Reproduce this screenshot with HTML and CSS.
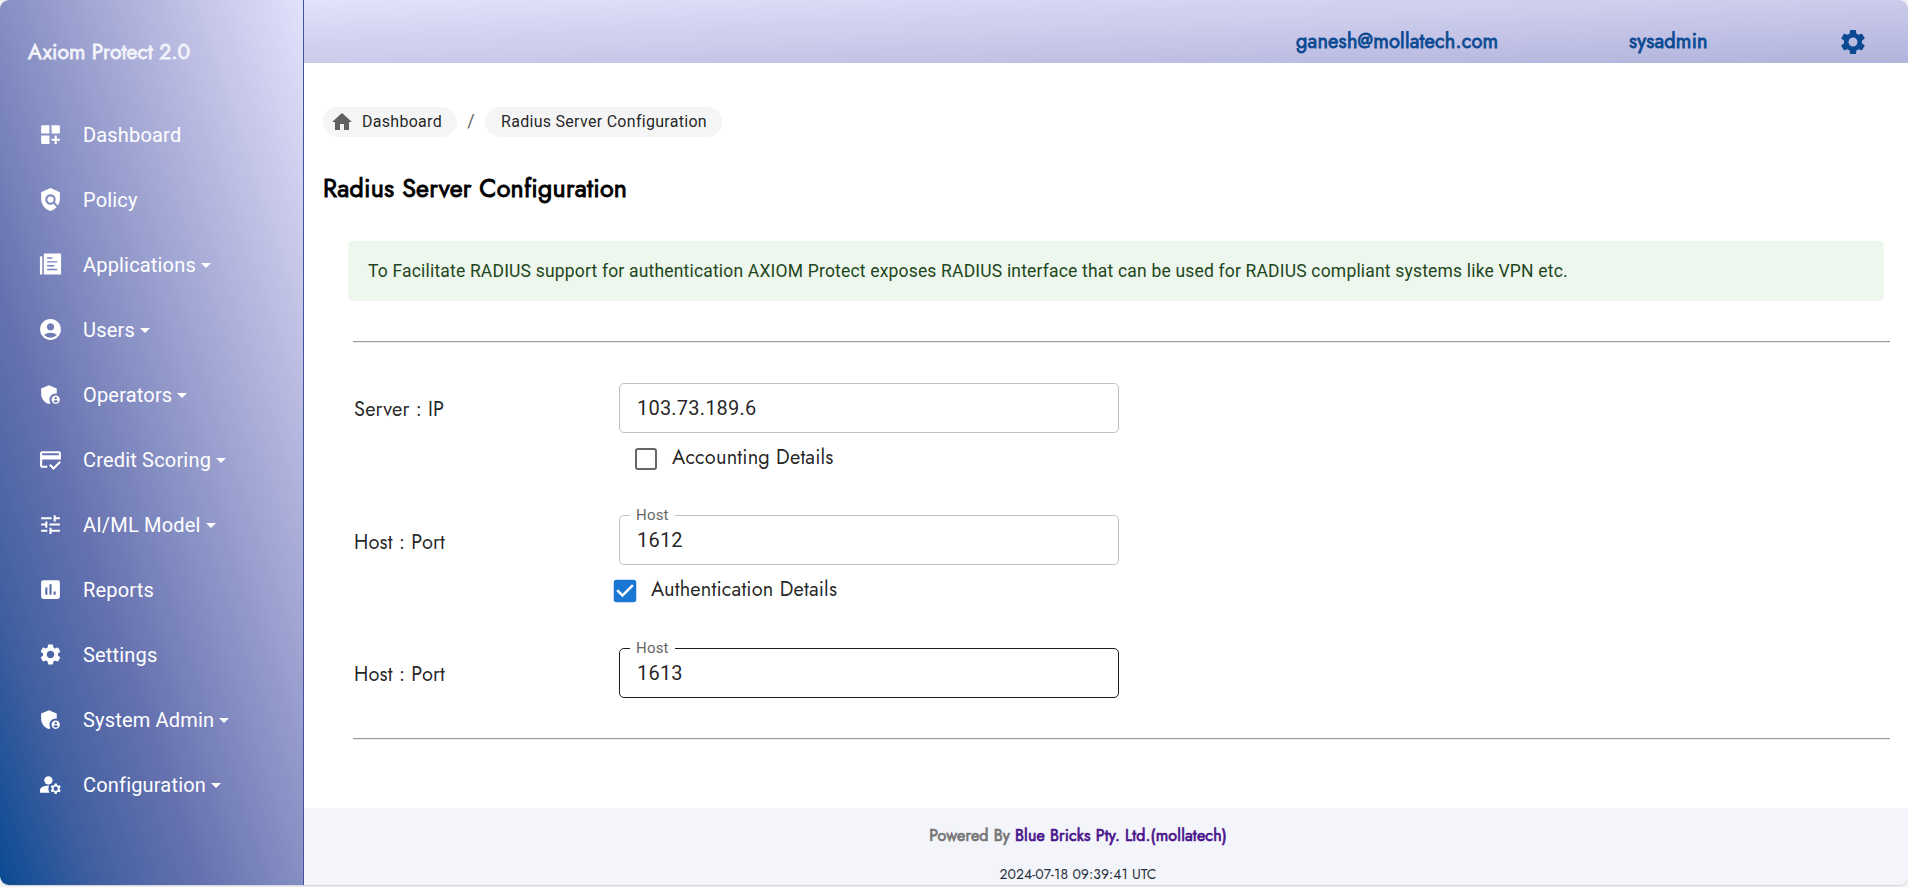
FILE: index.html
```html
<!DOCTYPE html>
<html lang="en">
<head>
<meta charset="utf-8">
<title>Radius Server Configuration</title>
<link rel="stylesheet" href="styles.css">
</head>
<body>
<svg class="sprite" width="0" height="0" aria-hidden="true">
  <symbol id="cog" viewBox="0 0 24 24"><path d="M19.14 12.94c.04-.3.06-.61.06-.94 0-.32-.02-.64-.07-.94l2.03-1.58c.18-.14.23-.41.12-.61l-1.92-3.32c-.12-.22-.37-.29-.59-.22l-2.39.96c-.5-.38-1.03-.7-1.62-.94l-.36-2.54c-.04-.24-.24-.41-.48-.41h-3.84c-.24 0-.43.17-.47.41l-.36 2.54c-.59.24-1.13.57-1.62.94l-2.39-.96c-.22-.08-.47 0-.59.22L2.74 8.87c-.12.21-.08.47.12.61l2.03 1.58c-.05.3-.09.63-.09.94s.02.64.07.94l-2.03 1.58c-.18.14-.23.41-.12.61l1.92 3.32c.12.22.37.29.59.22l2.39-.96c.5.38 1.03.7 1.62.94l.36 2.54c.05.24.24.41.48.41h3.84c.24 0 .44-.17.47-.41l.36-2.54c.59-.24 1.13-.56 1.62-.94l2.39.96c.22.08.47 0 .59-.22l1.92-3.32c.12-.22.07-.47-.12-.61zM12 15.6c-1.98 0-3.6-1.62-3.6-3.6s1.62-3.6 3.6-3.6 3.6 1.62 3.6 3.6-1.62 3.6-3.6 3.6"/></symbol>
  <symbol id="shield-user" viewBox="0 0 24 24"><path d="M17 11c.34 0 .67.04 1 .09V6.27L10.500 3 3 6.270v4.910c0 4.540 3.200 8.790 7.500 9.820.55-.13 1.080-.32 1.600-.55-.69-.98-1.100-2.170-1.100-3.450 0-3.310 2.690-6 6-6"/><path d="M17 13c-2.210 0-4 1.790-4 4s1.790 4 4 4 4-1.790 4-4-1.790-4-4-4m0 1.380c.62 0 1.120.51 1.120 1.120s-.51 1.120-1.120 1.120-1.120-.51-1.120-1.120.5-1.120 1.120-1.120m0 5.370c-.93 0-1.740-.46-2.240-1.170.05-.72 1.510-1.080 2.240-1.080s2.190.36 2.240 1.080c-.5.710-1.310 1.170-2.240 1.170"/></symbol>
</svg>
<div class="app">
  <aside class="sidebar">
    <div class="brand">Axiom Protect 2.0</div>
    <nav class="nav">
      <a class="item"><svg class="icon" viewBox="0 0 24 24"><path d="M4 3h7v8H3V4a1 1 0 0 1 1-1zM13 3h7a1 1 0 0 1 1 1v7h-8zM3 13h8v8H4a1 1 0 0 1-1-1zM18 13h-2v3h-3v2h3v3h2v-3h3v-2h-3z"/></svg><span>Dashboard</span></a>
      <a class="item"><svg class="icon" viewBox="0 0 24 24"><path d="M21 5l-9-4-9 4v6c0 5.550 3.840 10.740 9 12 2.300-.56 4.330-1.900 5.880-3.710l-3.120-3.120c-1.940 1.290-4.580 1.070-6.290-.64-1.950-1.950-1.950-5.120 0-7.070s5.120-1.950 7.070 0c1.710 1.710 1.920 4.350.64 6.290l2.900 2.900C20.290 15.690 21 13.380 21 11z"/><circle cx="12" cy="12" r="3"/></svg><span>Policy</span></a>
      <a class="item"><svg class="icon" viewBox="-1 -.5 26 26"><path fill-rule="evenodd" d="M6 1h16a1 1 0 0 1 1 1v20a1 1 0 0 1-1 1H6a1 1 0 0 1-1-1V2a1 1 0 0 1 1-1zM8.500 5v1.500H14V5zM8.500 9v1.500H19V9zM8.500 13v1.500H16V13zM8.500 17v1.500H19V17z"/><path d="M3.500 4v19H2a1 1 0 0 1-1-1V5a1 1 0 0 1 1-1z"/></svg><span>Applications</span><i class="caret"></i></a>
      <a class="item"><svg class="icon" viewBox="0 0 24 24"><path d="M12 2C6.480 2 2 6.480 2 12s4.480 10 10 10 10-4.480 10-10S17.520 2 12 2m0 4c1.930 0 3.500 1.570 3.500 3.500S13.930 13 12 13s-3.500-1.570-3.500-3.500S10.070 6 12 6m0 14c-2.030 0-4.430-.82-6.140-2.880C7.550 15.800 9.680 15 12 15s4.450.8 6.140 2.120C16.430 19.180 14.030 20 12 20"/></svg><span>Users</span><i class="caret"></i></a>
      <a class="item"><svg class="icon"><use href="#shield-user"/></svg><span>Operators</span><i class="caret"></i></a>
      <a class="item"><svg class="icon" viewBox="0 0 24 24"><path d="M20 4H4c-1.110 0-1.990.89-1.990 2L2 18c0 1.110.89 2 2 2h5v-2H4v-6h18V6c0-1.110-.89-2-2-2m0 4H4V6h16zM14.930 19.170l-2.830-2.830-1.410 1.410L14.930 22 22 14.930l-1.410-1.410z"/></svg><span>Credit Scoring</span><i class="caret"></i></a>
      <a class="item"><svg class="icon" viewBox="0 0 24 24"><path d="M3 17v2h6v-2zM3 5v2h10V5zm10 16v-2h8v-2h-8v-2h-2v6zM7 9v2H3v2h4v2h2V9zm14 4v-2H11v2zm-6-4h2V7h4V5h-4V3h-2z"/></svg><span>AI/ML Model</span><i class="caret"></i></a>
      <a class="item"><svg class="icon" viewBox="0 0 24 24"><path fill-rule="evenodd" d="M5 3h14a2 2 0 0 1 2 2v14a2 2 0 0 1-2 2H5a2 2 0 0 1-2-2V5a2 2 0 0 1 2-2M7 10v7h2v-7zM11 7v10h2V7zM15 14v3h2v-3z"/></svg><span>Reports</span></a>
      <a class="item"><svg class="icon"><use href="#cog"/></svg><span>Settings</span></a>
      <a class="item"><svg class="icon"><use href="#shield-user"/></svg><span>System Admin</span><i class="caret"></i></a>
      <a class="item"><svg class="icon" viewBox="0 0 24 24"><circle cx="10" cy="8" r="4"/><path d="M10.670 13.020C10.450 13.010 10.230 13 10 13c-2.420 0-4.680.67-6.610 1.820C2.510 15.340 2 16.320 2 17.350V20h9.260C10.470 18.870 10 17.490 10 16c0-1.070.25-2.070.67-2.980M20.750 16c0-.22-.03-.42-.06-.63l1.140-1.010-1-1.730-1.450.49c-.32-.27-.68-.48-1.080-.63L18 11h-2l-.3 1.490c-.4.150-.76.36-1.080.63l-1.450-.49-1 1.730 1.140 1.010c-.03.210-.06.410-.06.630s.03.420.06.630l-1.140 1.010 1 1.730 1.450-.49c.32.27.68.48 1.080.63L16 21h2l.3-1.490c.4-.15.76-.36 1.080-.63l1.450.49 1-1.730-1.140-1.010c.03-.21.06-.41.06-.63M17 18c-1.100 0-2-.9-2-2s.9-2 2-2 2 .9 2 2-.9 2-2 2"/></svg><span>Configuration</span><i class="caret"></i></a>
    </nav>
  </aside>
  <div class="page">
    <header class="topbar">
      <span class="mail">ganesh@mollatech.com</span>
      <span class="role">sysadmin</span>
      <svg class="gear"><use href="#cog"/></svg>
    </header>
    <main class="main">
      <div class="crumbs">
        <span class="chip chip-home"><svg class="home" viewBox="0 0 24 24"><path d="M10 20v-6h4v6h5v-8h3L12 3 2 12h3v8z"/></svg><span>Dashboard</span></span>
        <span class="slash">/</span>
        <span class="chip">Radius Server Configuration</span>
      </div>
      <h1 class="title">Radius Server Configuration</h1>
      <div class="alert">To Facilitate RADIUS support for authentication AXIOM Protect exposes RADIUS interface that can be used for RADIUS compliant systems like VPN etc.</div>
      <hr class="rule">
      <form class="form">
        <div class="row"><label class="label">Server : IP</label><div class="field">103.73.189.6</div></div>
        <div class="check check-accounting"><span class="box"></span><span class="check-text">Accounting Details</span></div>
        <div class="row"><label class="label label-low">Host : Port</label><div class="field">1612<span class="legend">Host</span></div></div>
        <div class="check check-auth"><span class="box box-on"><svg viewBox="0 0 24 24"><path d="M19 3H5c-1.110 0-2 .9-2 2v14c0 1.100.89 2 2 2h14c1.110 0 2-.9 2-2V5c0-1.100-.89-2-2-2m-9 14l-5-5 1.410-1.410L10 14.170l7.590-7.590L19 8z"/></svg></span><span class="check-text">Authentication Details</span></div>
        <div class="row"><label class="label">Host : Port</label><div class="field field-hover">1613<span class="legend">Host</span></div></div>
      </form>
      <hr class="rule">
    </main>
    <footer class="footer">
      <div class="powered">Powered By <a>Blue Bricks Pty. Ltd.(mollatech)</a></div>
      <div class="time">2024-07-18 09:39:41 UTC</div>
    </footer>
  </div>
</div>
</body>
</html>
```
FILE: styles.css
```css
* { box-sizing: border-box; }
body {
  margin: 0;
  height: 887px;
  overflow: hidden;
  background: #f0f0f2;
  font-family: Roboto, "Noto Sans", sans-serif;
  color: rgba(0, 0, 0, .87);
}
.sprite { display: block; }
.app {
  display: flex;
  height: 885px;
  border-radius: 9px;
  overflow: hidden;
  background: #fff;
  box-shadow: 0 1px 1px #d5d5da;
}
.sidebar {
  width: 304px;
  flex: none;
  border-right: 1px solid #43529a;
  background: linear-gradient(to right top, #0b4a92, #4260a1, #6571af, #868fc3, #a6aad6, #c5c6e8, #e2e2fc);
  color: #fff;
}
.brand {
  height: 102px;
  padding: 38px 0 0 28px;
  font: 400 21px/28px Jost, Lato, sans-serif;
  letter-spacing: .08px;
  -webkit-text-stroke: .8px currentColor;
  color: #f3f3fb;
}
.item {
  display: flex;
  align-items: center;
  height: 65px;
  padding-left: 38px;
  font-size: 20px;
  letter-spacing: .18px;
}
.icon { width: 25px; height: 25px; margin-right: 20px; fill: #fff; }
.caret {
  margin: 1px 0 0 5px;
  border: 5px solid transparent;
  border-top-color: #fff;
  border-bottom: 0;
}
.page { flex: 1; display: flex; flex-direction: column; min-width: 0; }
.topbar {
  display: flex;
  align-items: center;
  height: 63px;
  padding: 20px 40px 0 992px;
  background: linear-gradient(to right bottom, #e2e2fb, #cbcbeb, #b1b3dc);
  font: 400 20px/26px Jost, Lato, sans-serif;
  letter-spacing: .2px;
  -webkit-text-stroke: .8px currentColor;
  color: #0b4a92;
}
.mail { width: 333px; }
.role { flex: 1; }
.gear { width: 30px; height: 30px; fill: #0b4a92; -webkit-text-stroke: 0; }
.main { flex: 1; padding: 44px 18px 0 19px; }
.crumbs { display: flex; align-items: center; font-size: 16px; }
.chip {
  display: flex;
  align-items: center;
  height: 30px;
  padding: 0 15px 1px 16px;
  border-radius: 15px;
  background: #f5f5f5;
  line-height: 28px;
  letter-spacing: .29px;
}
.chip-home { padding: 0 15px 1px 7px; }
.home { width: 24px; height: 24px; margin-right: 8px; fill: #616161; }
.slash { width: 28px; text-align: center; font-size: 18px; line-height: 28px; padding-bottom: 2px; color: #666; }
.title {
  height: 44px;
  margin: 29px 0 0;
  font: 400 25px/44px Jost, Lato, sans-serif;
  letter-spacing: .24px;
  -webkit-text-stroke: .9px currentColor;
  color: #000;
}
.alert {
  height: 60px;
  margin: 31px 6px 0 25px;
  padding: 0 20px;
  border-radius: 5px;
  background: #edf7ed;
  font-size: 17.5px;
  line-height: 60px;
  letter-spacing: .183px;
  color: #1e4620;
}
.rule {
  height: 2px;
  margin: 40px 0 0 30px;
  border: 0;
  border-top: 1px solid #9a9a9a;
  border-bottom: 1px solid #eee;
}
.form { padding: 40px 0 0 31px; }
.row { display: flex; align-items: center; }
.label {
  width: 265px;
  padding-top: 3px;
  font: 400 20px/28px Jost, Lato, sans-serif;
  letter-spacing: .18px;
}
.label-low { padding-top: 5px; }
.field {
  position: relative;
  width: 500px;
  height: 50px;
  padding-left: 17px;
  border: 1px solid #c0c0c0;
  border-radius: 5px;
  font-size: 20px;
  line-height: 48px;
  letter-spacing: .2px;
}
.field-hover { border-color: #1c1c1c; }
.legend {
  position: absolute;
  left: 10px;
  top: -10px;
  padding: 0 6px;
  background: #fff;
  font-size: 15px;
  line-height: 18px;
  color: #666;
}
.check {
  display: flex;
  align-items: center;
  font: 400 20px/28px Jost, Lato, sans-serif;
  letter-spacing: .18px;
}
.check-accounting { height: 82px; padding: 0 0 30px 280px; }
.check-auth { height: 83px; padding: 0 0 31px 259px; }
.check-text { padding-bottom: 2px; }
.box { width: 22px; height: 22px; margin: 0 15px 0 1px; border: 2px solid #666; border-radius: 3px; }
.box-on { border: 0; display: flex; align-items: center; justify-content: center; }
.box-on svg { flex: none; width: 30px; height: 30px; fill: #1976d2; }
.footer {
  height: 77px;
  padding: 14px 56px 0 0;
  background: #f4f5fa;
  text-align: center;
  font-family: Jost, Lato, sans-serif;
}
.powered {
  font-size: 16px;
  line-height: 28px;
  letter-spacing: .18px;
  -webkit-text-stroke: .7px currentColor;
  color: #757575;
}
.powered a { color: #4a148c; }
.time { margin-top: 14px; font-size: 14px; line-height: 20px; letter-spacing: .05px; color: #28303c; }
```
